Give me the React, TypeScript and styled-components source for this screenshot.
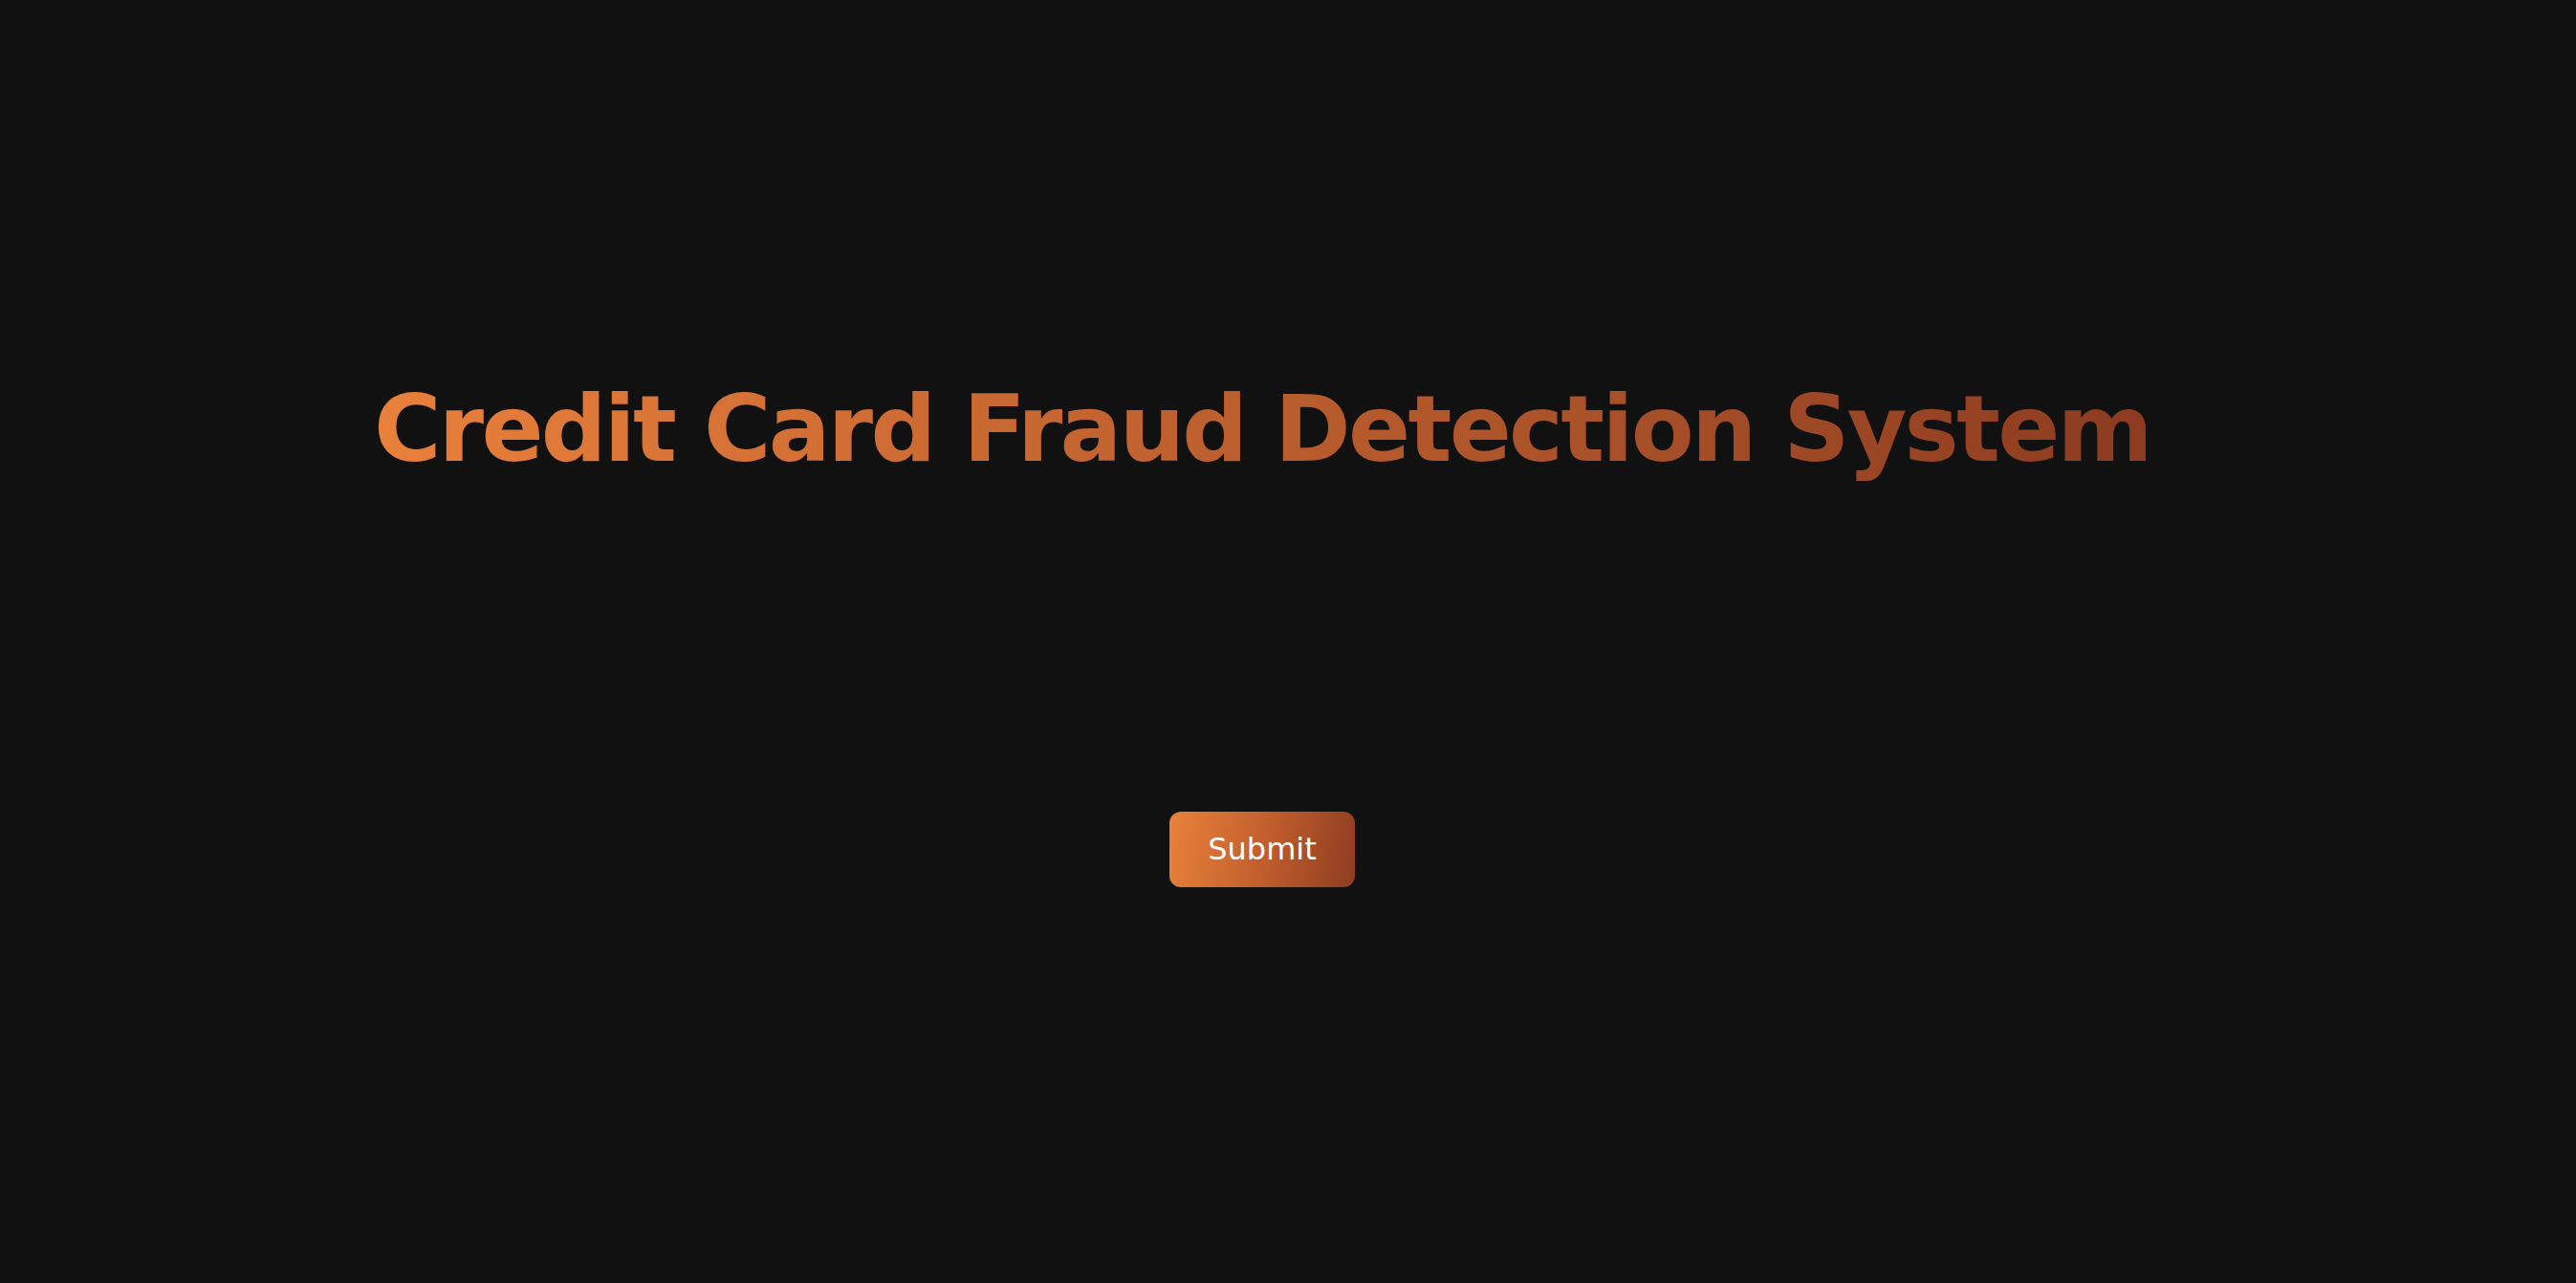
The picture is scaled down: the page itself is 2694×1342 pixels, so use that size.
import React from "react";
import styled, { createGlobalStyle } from "styled-components";

const GlobalStyle = createGlobalStyle`
  html, body {
    margin: 0;
    padding: 0;
    background: #111111;
  }
  body {
    font-family: "DejaVu Sans", "Liberation Sans", sans-serif;
  }
`;

const Page = styled.main`
  min-height: 100vh;
  width: calc(100% - 54px);
  display: flex;
  flex-direction: column;
  align-items: center;
  padding-top: 392px;
  box-sizing: border-box;
`;

const Title = styled.h1`
  margin: 0;
  font-family: "DejaVu Sans", "Liberation Sans", sans-serif;
  font-size: 96px;
  font-weight: 700;
  line-height: 1.2;
  letter-spacing: -2.7px;
  background: linear-gradient(90deg, #e9803b 0%, #8c3b20 100%);
  -webkit-background-clip: text;
  background-clip: text;
  color: transparent;
  -webkit-text-fill-color: transparent;
  display: inline-block;
`;

const Form = styled.form`
  display: flex;
  flex-direction: column;
  align-items: center;
  margin-top: 342px;
`;

const SubmitButton = styled.button`
  font-family: "DejaVu Sans", "Liberation Sans", sans-serif;
  font-size: 32px;
  line-height: 47px;
  font-weight: 400;
  color: #ffffff;
  border: none;
  border-radius: 12px;
  padding: 16px 40px;
  background: linear-gradient(100deg, #ea813b 0%, #c25f2d 50%, #8e3c21 100%);
  cursor: pointer;
`;

export default function App() {
  return (
    <>
      <GlobalStyle />
      <Page>
        <Title>Credit Card Fraud Detection System</Title>
        <Form onSubmit={(e) => e.preventDefault()}>
          <SubmitButton type="submit">Submit</SubmitButton>
        </Form>
      </Page>
    </>
  );
}
